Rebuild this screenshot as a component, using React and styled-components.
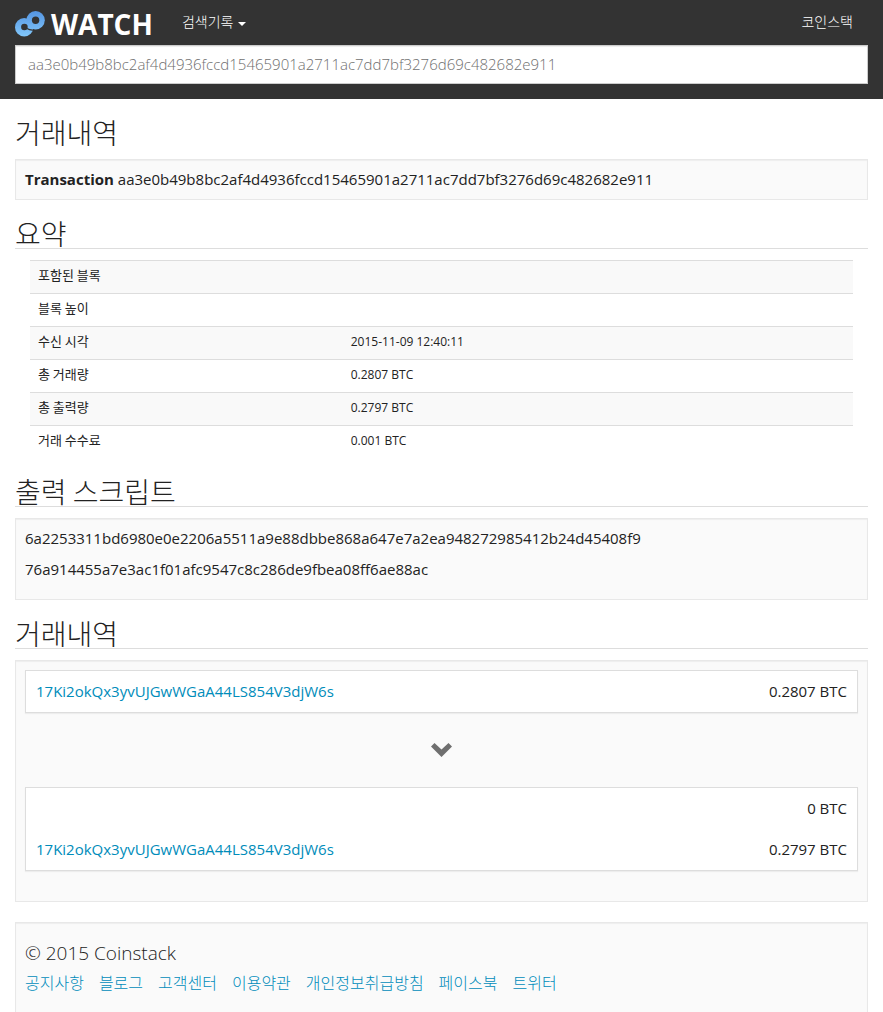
import React from 'react';
import styled, { createGlobalStyle } from 'styled-components';

const GlobalStyle = createGlobalStyle`
  * { box-sizing: border-box; }
  body {
    margin: 0;
    background: #fff;
    color: #222;
    font: 400 15px/21px "Open Sans", "Noto Sans CJK KR", sans-serif;
  }
  a { color: #008cba; text-decoration: none; }
`;

const Header = styled.header`
  background: #333;
  padding: 0 15px 15px;
`;
const NavBar = styled.nav`
  display: flex;
  align-items: center;
  height: 45px;
`;
const Brand = styled.a`
  display: flex;
  align-items: center;
  gap: 6px;
  height: 45px;
  padding-top: 3px;
  margin-right: 29px;
  && { color: #fff; }
  font-size: 28px;
  font-weight: 700;
  line-height: 42px;
`;
const NavButton = styled.button`
  display: flex;
  align-items: center;
  gap: 5px;
  border: 0;
  padding: 0 0 2px;
  background: none;
  color: #fff;
  font: 300 14px/21px "Noto Sans CJK KR", sans-serif;
`;
const Caret = styled.span`
  margin-top: 4px;
  border: 4px solid transparent;
  border-top-color: #fff;
  border-bottom: 0;
`;
const NavLink = styled.a`
  && { color: #fff; }
  margin-left: auto;
  padding: 0 15px 2px 0;
  font: 300 14px/21px "Noto Sans CJK KR", sans-serif;
`;
const Search = styled.input`
  display: block;
  width: 100%;
  height: 39px;
  padding: 7px 12px 9px;
  border: 1px solid #ccc;
  border-radius: 0;
  background: #fff;
  box-shadow: inset 0 1px 1px rgba(0, 0, 0, 0.075);
  color: #6f6f6f;
  font: 300 15px/21px "Open Sans", sans-serif;
`;
const Page = styled.main`
  padding: 0 15px;
`;
const Section = styled.section`
  margin-top: 20px;
`;
const Heading = styled.h3`
  margin: 0 0 11px;
  padding-bottom: 2px;
  border-bottom: 1px solid ${p => (p.$ruled ? '#ddd' : 'transparent')};
  font: 300 28px/26px "Noto Sans CJK KR", sans-serif;
`;
const Well = styled.div`
  padding: 9px;
  border: 1px solid #e8e8e8;
  background: #fafafa;
  box-shadow: inset 0 1px 1px rgba(0, 0, 0, 0.05);
  overflow-wrap: anywhere;
`;
const Script = styled.p`
  margin: 0 0 10px;
`;
const TableWrap = styled.div`
  padding: 0 15px;
`;
const Table = styled.table`
  width: 100%;
  border-collapse: separate;
  border-spacing: 0;
  table-layout: fixed;
`;
const Row = styled.tr`
  &:nth-child(odd) { background: #f9f9f9; }
`;
const Label = styled.th`
  width: 38%;
  height: 33px;
  padding: 0 8px 4px;
  border-top: 1px solid #ddd;
  text-align: left;
  font: 400 13px/16px "Noto Sans CJK KR", sans-serif;
`;
const Value = styled.td`
  padding: 0 8px 2px;
  border-top: 1px solid #ddd;
  font-size: 12px;
  line-height: 16px;
`;
const Panel = styled.div`
  padding: 10px;
  border: 1px solid #ddd;
  background: #fff;
  box-shadow: 0 1px 1px rgba(0, 0, 0, 0.05);
  display: flex;
  flex-direction: column;
  gap: 20px;
`;
const Entry = styled.div`
  display: flex;
  justify-content: space-between;
  gap: 10px;
`;
const Amount = styled.span`
  margin-left: auto;
  white-space: nowrap;
`;
const Flow = styled.div`
  display: flex;
  align-items: center;
  justify-content: center;
  height: 74px;
`;
const Transfers = styled(Well)`
  padding-bottom: 30px;
`;
const Footer = styled.footer`
  margin-top: 20px;
  padding: 15px 9px 30px;
  border: 1px solid #e8e8e8;
  background: #fafafa;
  box-shadow: inset 0 1px 1px rgba(0, 0, 0, 0.05);
`;
const Copyright = styled.p`
  margin: 0;
  font-size: 19px;
  font-weight: 300;
  line-height: 30px;
`;
const FooterLinks = styled.nav`
  display: flex;
  flex-wrap: wrap;
  gap: 0 15px;
  font: 300 16px/28px "Noto Sans CJK KR", sans-serif;
`;

function Logo() {
  return (
    <svg width="30" height="26" viewBox="0 0 30 26" aria-hidden="true">
      <defs>
        <linearGradient id="brand" gradientUnits="userSpaceOnUse" x1="0" y1="0" x2="0" y2="26">
          <stop offset="0" stopColor="#5595e2" />
          <stop offset="1" stopColor="#82c8fb" />
        </linearGradient>
        <mask id="rings">
          <circle cx="20.600" cy="9.200" r="9.200" fill="#fff" />
          <circle cx="9.200" cy="16.300" r="9.200" fill="#fff" />
          <circle cx="20.600" cy="9.200" r="3.700" fill="#000" />
          <circle cx="9.400" cy="16" r="3.300" fill="#000" />
          <path d="M12 17.500q3 2 7 1.500" fill="none" stroke="#000" strokeWidth="1.200" />
        </mask>
      </defs>
      <rect width="30" height="26" fill="url(#brand)" mask="url(#rings)" />
    </svg>
  );
}

function ChevronDown() {
  return (
    <svg width="22" height="14" viewBox="0 0 22 14" aria-hidden="true">
      <path fill="#6f6f6f" d="M3.500 0 10.500 6.500l7-6.500L21 3.600 10.500 14 0 3.600Z" />
    </svg>
  );
}

const HASH = 'aa3e0b49b8bc2af4d4936fccd15465901a2711ac7dd7bf3276d69c482682e911';
const ADDRESS = '17Ki2okQx3yvUJGwWGaA44LS854V3djW6s';
const summary = [
  ['포함된 블록', ''],
  ['블록 높이', ''],
  ['수신 시각', '2015-11-09 12:40:11'],
  ['총 거래량', '0.2807 BTC'],
  ['총 출력량', '0.2797 BTC'],
  ['거래 수수료', '0.001 BTC'],
];
const scripts = [
  '6a2253311bd6980e0e2206a5511a9e88dbbe868a647e7a2ea948272985412b24d45408f9',
  '76a914455a7e3ac1f01afc9547c8c286de9fbea08ff6ae88ac',
];
const links = ['공지사항', '블로그', '고객센터', '이용약관', '개인정보취급방침', '페이스북', '트위터'];

export default function App() {
  return (
    <>
      <GlobalStyle />
      <Header>
        <NavBar>
          <Brand href="#"><Logo />WATCH</Brand>
          <NavButton type="button">검색기록<Caret /></NavButton>
          <NavLink href="#">코인스택</NavLink>
        </NavBar>
        <Search type="text" aria-label="검색" defaultValue={HASH} />
      </Header>
      <Page>
        <Section>
          <Heading>거래내역</Heading>
          <Well><strong>Transaction</strong> {HASH}</Well>
        </Section>
        <Section>
          <Heading $ruled>요약</Heading>
          <TableWrap>
            <Table>
              <tbody>
                {summary.map(([label, value]) => (
                  <Row key={label}>
                    <Label scope="row">{label}</Label>
                    <Value>{value}</Value>
                  </Row>
                ))}
              </tbody>
            </Table>
          </TableWrap>
        </Section>
        <Section>
          <Heading $ruled>출력 스크립트</Heading>
          <Well>
            {scripts.map(s => <Script key={s}>{s}</Script>)}
          </Well>
        </Section>
        <Section>
          <Heading $ruled>거래내역</Heading>
          <Transfers>
            <Panel>
              <Entry><a href="#">{ADDRESS}</a><Amount>0.2807 BTC</Amount></Entry>
            </Panel>
            <Flow><ChevronDown /></Flow>
            <Panel>
              <Entry><Amount>0 BTC</Amount></Entry>
              <Entry><a href="#">{ADDRESS}</a><Amount>0.2797 BTC</Amount></Entry>
            </Panel>
          </Transfers>
        </Section>
        <Footer>
          <Copyright>© 2015 Coinstack</Copyright>
          <FooterLinks>
            {links.map(l => <a key={l} href="#">{l}</a>)}
          </FooterLinks>
        </Footer>
      </Page>
    </>
  );
}
